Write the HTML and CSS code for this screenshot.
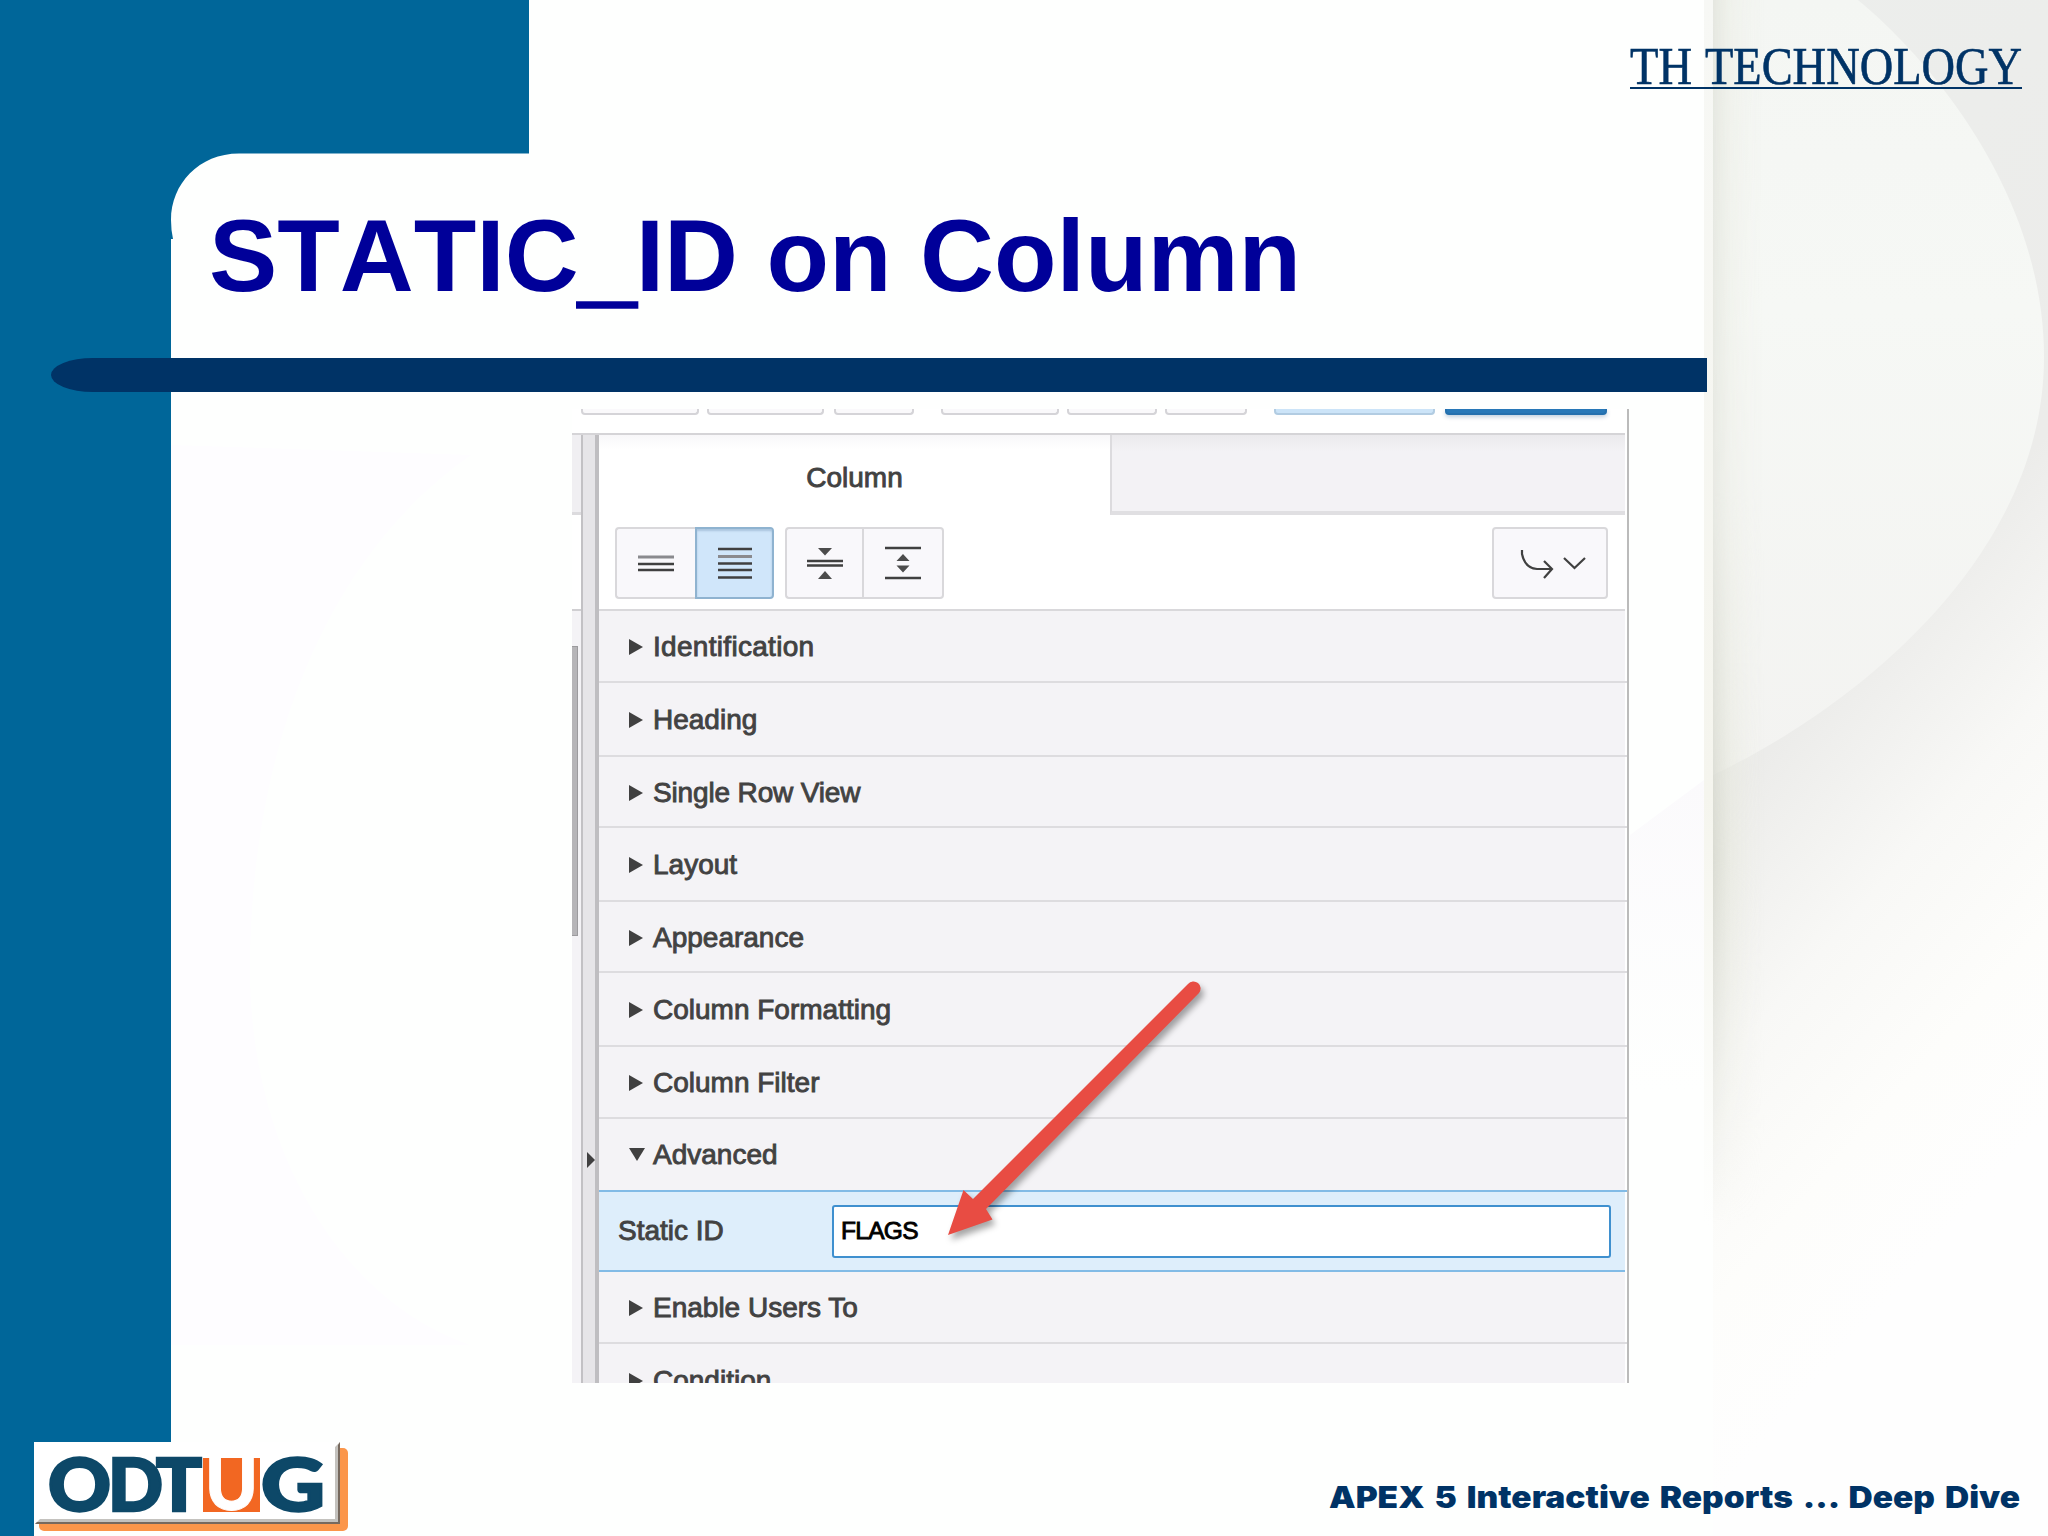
FILE: index.html
```
<!DOCTYPE html>
<html lang="en">
<head>
    <meta charset="UTF-8">
    <meta name="viewport" content="width=device-width, initial-scale=1.0">
    <title>STATIC_ID on Column</title>
    <link rel="stylesheet" href="styles.css">
</head>
<body>

<div class="slide">
    <!-- Slide template background -->
    <svg class="backdrop" viewBox="0 0 2048 1536" aria-hidden="true">
        <defs>
            <linearGradient id="shade" x1="0" y1="0" x2="0.25" y2="1">
                <stop offset="0" stop-color="#eceeec"/>
                <stop offset="0.5" stop-color="#ececea"/>
                <stop offset="0.66" stop-color="#f8f8f6"/>
                <stop offset="0.8" stop-color="#fdfdfb"/>
                <stop offset="0.92" stop-color="#fefefe"/>
            </linearGradient>
            <linearGradient id="disc" x1="0" y1="0" x2="0" y2="1">
                <stop offset="0" stop-color="#f4f6f3"/>
                <stop offset="0.4" stop-color="#f6f8f5"/>
                <stop offset="1" stop-color="#f3f3f1"/>
            </linearGradient>
            <linearGradient id="fold" x1="0" y1="0" x2="1" y2="0">
                <stop offset="0" stop-color="#d5d7cc" stop-opacity="0.8"/>
                <stop offset="0.35" stop-color="#e6e8dc" stop-opacity="0.5"/>
                <stop offset="1" stop-color="#f0f0ea" stop-opacity="0"/>
            </linearGradient>
            <linearGradient id="fadeDown" x1="0" y1="0" x2="0" y2="1">
                <stop offset="0" stop-color="#fff" stop-opacity="0.6"/>
                <stop offset="0.4" stop-color="#fff" stop-opacity="0.5"/>
                <stop offset="0.7" stop-color="#fff"/>
                <stop offset="1" stop-color="#fff" stop-opacity="0"/>
            </linearGradient>
            <linearGradient id="strip" x1="0" y1="0" x2="0" y2="1">
                <stop offset="0" stop-color="#f7f8f5"/>
                <stop offset="0.65" stop-color="#f5f5ee"/>
                <stop offset="1" stop-color="#fefffe"/>
            </linearGradient>
            <linearGradient id="haze" x1="0" y1="0" x2="0" y2="1">
                <stop offset="0" stop-color="#fbfafc"/>
                <stop offset="1" stop-color="#fefffe"/>
            </linearGradient>
            <mask id="foldMask"><rect x="1700" width="100" height="1225" fill="url(#fadeDown)"/></mask>
        </defs>
        <rect width="2048" height="1536" fill="#fefffe"/>
        <path d="M1704 780L1630 835V1090H1704Z" fill="url(#haze)"/>
        <path d="M471 455C320 560 250 760 250 970C250 1150 340 1300 470 1345H171V445Z" fill="#fefdff"/>
        <rect x="1704" width="9" height="1225" fill="url(#strip)"/>
        <rect x="1713" width="335" height="1536" fill="url(#shade)"/>
        <path d="M1713 0H1858C1925 55 2044 190 2044 357C2044 560 1850 710 1713 775Z" fill="url(#disc)"/>
        <rect x="1713" width="52" height="1225" fill="url(#fold)" mask="url(#foldMask)"/>
        <path d="M0 0H529V153.500H239C199 153.500 171 184 171 220Q171 230 173 239H171V1442H34V1536H0Z" fill="#006699"/>
    </svg>

    <header class="slide-header">
        <svg class="brand" width="396" height="48" viewBox="0 0 396 48">
            <text x="0" y="40" textLength="62" lengthAdjust="spacingAndGlyphs">TH</text>
            <text x="75" y="40" textLength="317" lengthAdjust="spacingAndGlyphs">TECHNOLOGY</text>
            <rect y="43" width="392" height="2"/>
        </svg>
    </header>

    <h1>STATIC<span class="underscore">_</span>ID on Column</h1>
    <div class="rule"></div>

    <main class="shot">
        <div class="topbar">
            <span class="w-a"></span>
            <span class="w-b"></span>
            <span class="w-c"></span>
            <span class="w-d"></span>
            <span class="w-e"></span>
            <span class="w-f"></span>
            <span class="w-g light"></span>
            <span class="w-h primary"></span>
        </div>
        <div class="workspace">
            <div class="left-pane">
                <div class="left-tab"></div>
                <div class="left-tools"></div>
                <div class="scroll-thumb"></div>
            </div>
            <div class="splitter"><i class="split-arrow"></i></div>

            <section class="properties">
                <div class="tabs">
                    <div class="tab">Column</div>
                    <div class="tab-rest"></div>
                </div>
                <div class="toolbar">
                    <div class="btn-group first">
                        <button>
                            <svg width="36" height="32" viewBox="0 0 36 32"><path class="faint" d="M0 10H36"/><path d="M0 17H36M0 23H36"/></svg>
                        </button>
                        <button class="active">
                            <svg width="34" height="32" viewBox="0 0 34 32"><path class="faint" d="M0 9.500H34"/><path d="M0 2H34M0 16.500H34M0 23H34M0 30.500H34"/></svg>
                        </button>
                    </div>
                    <div class="btn-group second">
                        <button>
                            <svg width="36" height="32" viewBox="0 0 36 32"><path d="M0 14H36M0 18.500H36"/><path class="solid" d="M11 1H25L18 8.500ZM11 32H25L18 24Z"/></svg>
                        </button>
                        <button>
                            <svg width="36" height="34" viewBox="0 0 36 34"><path d="M0 2H36M0 32H36"/><path class="solid" d="M11.500 15H24.500L18 8ZM11.500 19.500H24.500L18 26.500Z"/></svg>
                        </button>
                    </div>
                    <button class="goto">
                        <svg width="66" height="32" viewBox="0 0 66 32"><path d="M2 2V6Q5 20 17 21H32M24 13L32 21L24 30M44 10L54.500 20L65 10"/></svg>
                    </button>
                </div>

                <div class="groups">
                    <div class="group wide"><i></i>Identification</div>
                    <div class="group"><i></i>Heading</div>
                    <div class="group tight"><i></i>Single Row View</div>
                    <div class="group"><i></i>Layout</div>
                    <div class="group"><i></i>Appearance</div>
                    <div class="group"><i></i>Column Formatting</div>
                    <div class="group"><i></i>Column Filter</div>
                    <div class="group open"><i></i>Advanced</div>
                    <div class="field">
                        <label for="staticId">Static ID</label>
                        <input type="text" id="staticId" value="FLAGS">
                    </div>
                    <div class="group"><i></i>Enable Users To</div>
                    <div class="group"><i></i>Condition</div>
                </div>
            </section>
        </div>

        <!-- Callout arrow -->
        <svg class="callout" width="270" height="270" viewBox="940 975 270 270">
            <path d="M948 1235L963.500 1190L973 1199L1188 984A7 7 0 0 1 1199 993L986 1209L992.500 1219.500Z"/>
        </svg>
    </main>

    <footer>
        <svg class="logo" width="316" height="94" viewBox="0 0 316 94">
            <rect x="5" y="6" width="309" height="83" rx="5" fill="#fb964a"/>
            <path d="M0 0H306V82H0Z" fill="#fff"/>
            <path d="M306 0V82H1L6 77H301V5Z" fill="#c4c2be"/>
            <path d="M306 0V82H1L3 80H304V3Z" fill="#77695e"/>
            <g class="logo-text">
                <text x="14" y="69" textLength="63" lengthAdjust="spacingAndGlyphs">O</text>
                <text x="74" y="69" textLength="55" lengthAdjust="spacingAndGlyphs">D</text>
                <text x="122" y="69" textLength="46" lengthAdjust="spacingAndGlyphs">T</text>
                <rect x="169" y="16" width="57" height="54" fill="#f26722" stroke="none"/>
                <text class="u" x="171" y="68" textLength="53" lengthAdjust="spacingAndGlyphs">U</text>
                <text x="227" y="69" textLength="64" lengthAdjust="spacingAndGlyphs">G</text>
            </g>
        </svg>
        <svg class="deck-title" width="700" height="50" viewBox="0 0 700 50">
            <text x="0" y="32" textLength="691" lengthAdjust="spacingAndGlyphs">APEX 5 Interactive Reports ... Deep Dive</text>
        </svg>
    </footer>
</div>

</body>
</html>
```
FILE: styles.css
```
* {
    box-sizing: border-box;
}

body {
    margin: 0;
    font-family: "Liberation Sans", Arial, sans-serif;
}

.slide {
    position: relative;
    width: 2048px;
    height: 1536px;
    overflow: hidden;
    display: flex;
    flex-direction: column;
}

.backdrop {
    position: absolute;
    inset: 0;
    z-index: -1;
}

svg {
    display: block;
    overflow: visible;
}

.slide-header {
    display: flex;
    justify-content: flex-end;
    height: 153px;
    padding: 44px 22px 0 0;
}

.brand {
    font-family: "Liberation Serif", serif;
    font-size: 52px;
    fill: #003366;
}

.brand text {
    stroke: #003366;
    stroke-width: 0.6;
}

h1 {
    margin: 0;
    height: 205px;
    padding: 44px 0 0 209px;
    font-size: 102.4px;
    line-height: 118px;
    font-kerning: none;
    color: #000099;
    white-space: nowrap;
}

.underscore {
    position: relative;
    top: 4px;
    -webkit-text-stroke: 3.500px;
}

.rule {
    flex: none;
    width: 1656px;
    height: 34px;
    margin-left: 51px;
    background-color: #003366;
    border-radius: 42px 0 0 42px / 17px 0 0 17px;
}

/* Page designer screenshot */
.shot {
    position: relative;
    flex: none;
    width: 1057px;
    height: 974px;
    margin: 17px 0 0 572px;
    padding-right: 2px;
    overflow: hidden;
    background-color: #fff;
    border-right: 2px solid #bbb;
    color: #424242;
}

.topbar {
    display: flex;
    height: 26px;
    padding-left: 9px;
    border-bottom: 2px solid #d5d4d7;
}

.topbar span {
    height: 6px;
    background-color: #faf9fb;
    border: 2px solid #d5d4d8;
    border-top: 0;
    border-radius: 0 0 4px 4px;
}

.w-a { width: 118px; margin-right: 8px; }
.w-b { width: 117px; margin-right: 10px; }
.w-c { width: 80px; margin-right: 27px; }
.w-d { width: 118px; margin-right: 8px; }
.w-e { width: 90px; margin-right: 8px; }
.w-f { width: 82px; margin-right: 27px; }
.w-g { width: 161px; margin-right: 10px; }
.w-h { width: 162px; }

.topbar .light {
    background-color: #cce4f8;
    border-color: #b2cce2;
}

.topbar .primary {
    background-color: #2878b8;
    border-color: #2570ae;
    box-shadow: 0 2px 4px rgba(0, 60, 120, 0.25);
}

.workspace {
    display: flex;
    height: 948px;
}

.left-pane {
    width: 9px;
    background-color: #f4f3f6;
}

.left-tab {
    height: 80px;
    background-color: #f0eff2;
    border-bottom: 3px solid #dcdbde;
}

.left-tools {
    height: 96px;
    margin-bottom: 35px;
    background-color: #fff;
    border-bottom: 2px solid #d0cfd2;
}

.scroll-thumb {
    width: 6px;
    height: 290px;
    background-color: #b6b5b8;
    border: 1px solid #9c9b9e;
    border-left: 0;
}

.splitter {
    width: 18px;
    padding: 717px 0 0 4px;
    background-color: #e6e5e8;
    border-left: 2px solid #c2c1c4;
    border-right: 4px solid #bfbec1;
}

.split-arrow {
    display: block;
    border: 8px solid transparent;
    border-left-color: #404040;
    border-right: 0;
}

.properties {
    flex: 1;
}

.tabs {
    display: flex;
    height: 80px;
}

.tab {
    width: 511px;
    padding-top: 25px;
    text-align: center;
    font-size: 28px;
    line-height: 36px;
    -webkit-text-stroke: 0.9px;
    background: linear-gradient(#f8f7f9, #fff 14px);
}

.tab-rest {
    flex: 1;
    background: linear-gradient(#ebeaed, #f3f2f5 16px);
    border-left: 2px solid #dcdbde;
    border-bottom: 4px solid #e0dfe2;
}

.toolbar {
    display: flex;
    height: 96px;
    padding: 12px 17px 0 16px;
    border-bottom: 2px solid #d9d8db;
}

button {
    display: flex;
    align-items: center;
    justify-content: center;
    padding: 0;
    height: 72px;
    background-color: #f9f8fb;
    border: 2px solid #d9d8db;
    border-radius: 4px;
}

button svg {
    fill: none;
    stroke: #404040;
    stroke-width: 2.5;
}

.faint {
    stroke: #8a8a8e;
    stroke-width: 3;
}

.solid {
    fill: #4c4c4c;
    stroke: none;
}

.btn-group {
    display: flex;
}

.btn-group button:first-child {
    width: 80px;
    border-right: 0;
    border-radius: 4px 0 0 4px;
}

.btn-group button:last-child {
    width: 79px;
    border-radius: 0 4px 4px 0;
}

.btn-group button.active {
    background-color: #d0e6fa;
    border-color: #8fb3d0;
    box-shadow: inset 0 2px 2px rgba(60, 100, 140, 0.25);
}

.second {
    margin-left: 11px;
}

.second button:first-child {
    width: 77px;
}

.second button:last-child {
    width: 82px;
}

.goto {
    width: 116px;
    margin-left: auto;
}

.goto svg {
    margin: 2px 0 0 5px;
    stroke-width: 2.2;
}

.groups {
    display: grid;
    grid-template-rows: 72px 74px 71px 74px 71px 74px 72px 73px 80px 72px 73px;
    background-color: #f4f3f6;
}

.group {
    display: flex;
    align-items: center;
    margin-right: -2px;
    padding: 2px 0 0 30px;
    font-size: 28px;
    -webkit-text-stroke: 0.9px;
    border-bottom: 2px solid #dddcdf;
}

.group.wide {
    letter-spacing: 0.3px;
}

.group.tight {
    letter-spacing: -0.15px;
}

.group i {
    width: 0;
    margin-right: 10px;
    border: 8px solid transparent;
    border-left: 14px solid #404040;
    border-right: 0;
}

.group.open {
    padding-top: 0;
    border-bottom-color: #82bbe6;
}

.group.open i {
    margin-right: 8px;
    border: 8px solid transparent;
    border-top: 13px solid #404040;
    border-bottom: 0;
}

.field {
    display: flex;
    align-items: center;
    padding: 0 14px 0 19px;
    background-color: #deeefb;
    border-bottom: 2px solid #82bbe6;
}

.field label {
    width: 214px;
    padding-bottom: 1px;
    font-size: 28px;
    -webkit-text-stroke: 0.9px;
}

.field input {
    flex: 1;
    height: 53px;
    padding: 0 7px;
    font-family: inherit;
    font-size: 24.5px;
    color: #000;
    letter-spacing: -0.7px;
    -webkit-text-stroke: 0.9px;
    background-color: #fff;
    border: 2px solid #3f90cf;
    border-radius: 3px;
}

.callout {
    position: absolute;
    left: 368px;
    top: 566px;
    fill: #e84c43;
    filter: drop-shadow(3px 5px 3px rgba(0, 0, 0, 0.35));
}

footer {
    display: flex;
    justify-content: space-between;
    margin-top: 59px;
    padding: 0 19px 0 34px;
}

.logo-text {
    font-family: Lato, sans-serif;
    font-weight: 900;
    font-size: 72px;
    fill: #0d4868;
    stroke: #0d4868;
    stroke-width: 2.5;
}

.logo-text .u {
    fill: #fff;
    stroke: #fff;
    stroke-width: 1;
}

.deck-title {
    margin-top: 34px;
    font-family: Inter, sans-serif;
    font-weight: 900;
    font-size: 30px;
    font-feature-settings: "calt" 0;
    word-spacing: 3px;
    fill: #003366;
}
```
